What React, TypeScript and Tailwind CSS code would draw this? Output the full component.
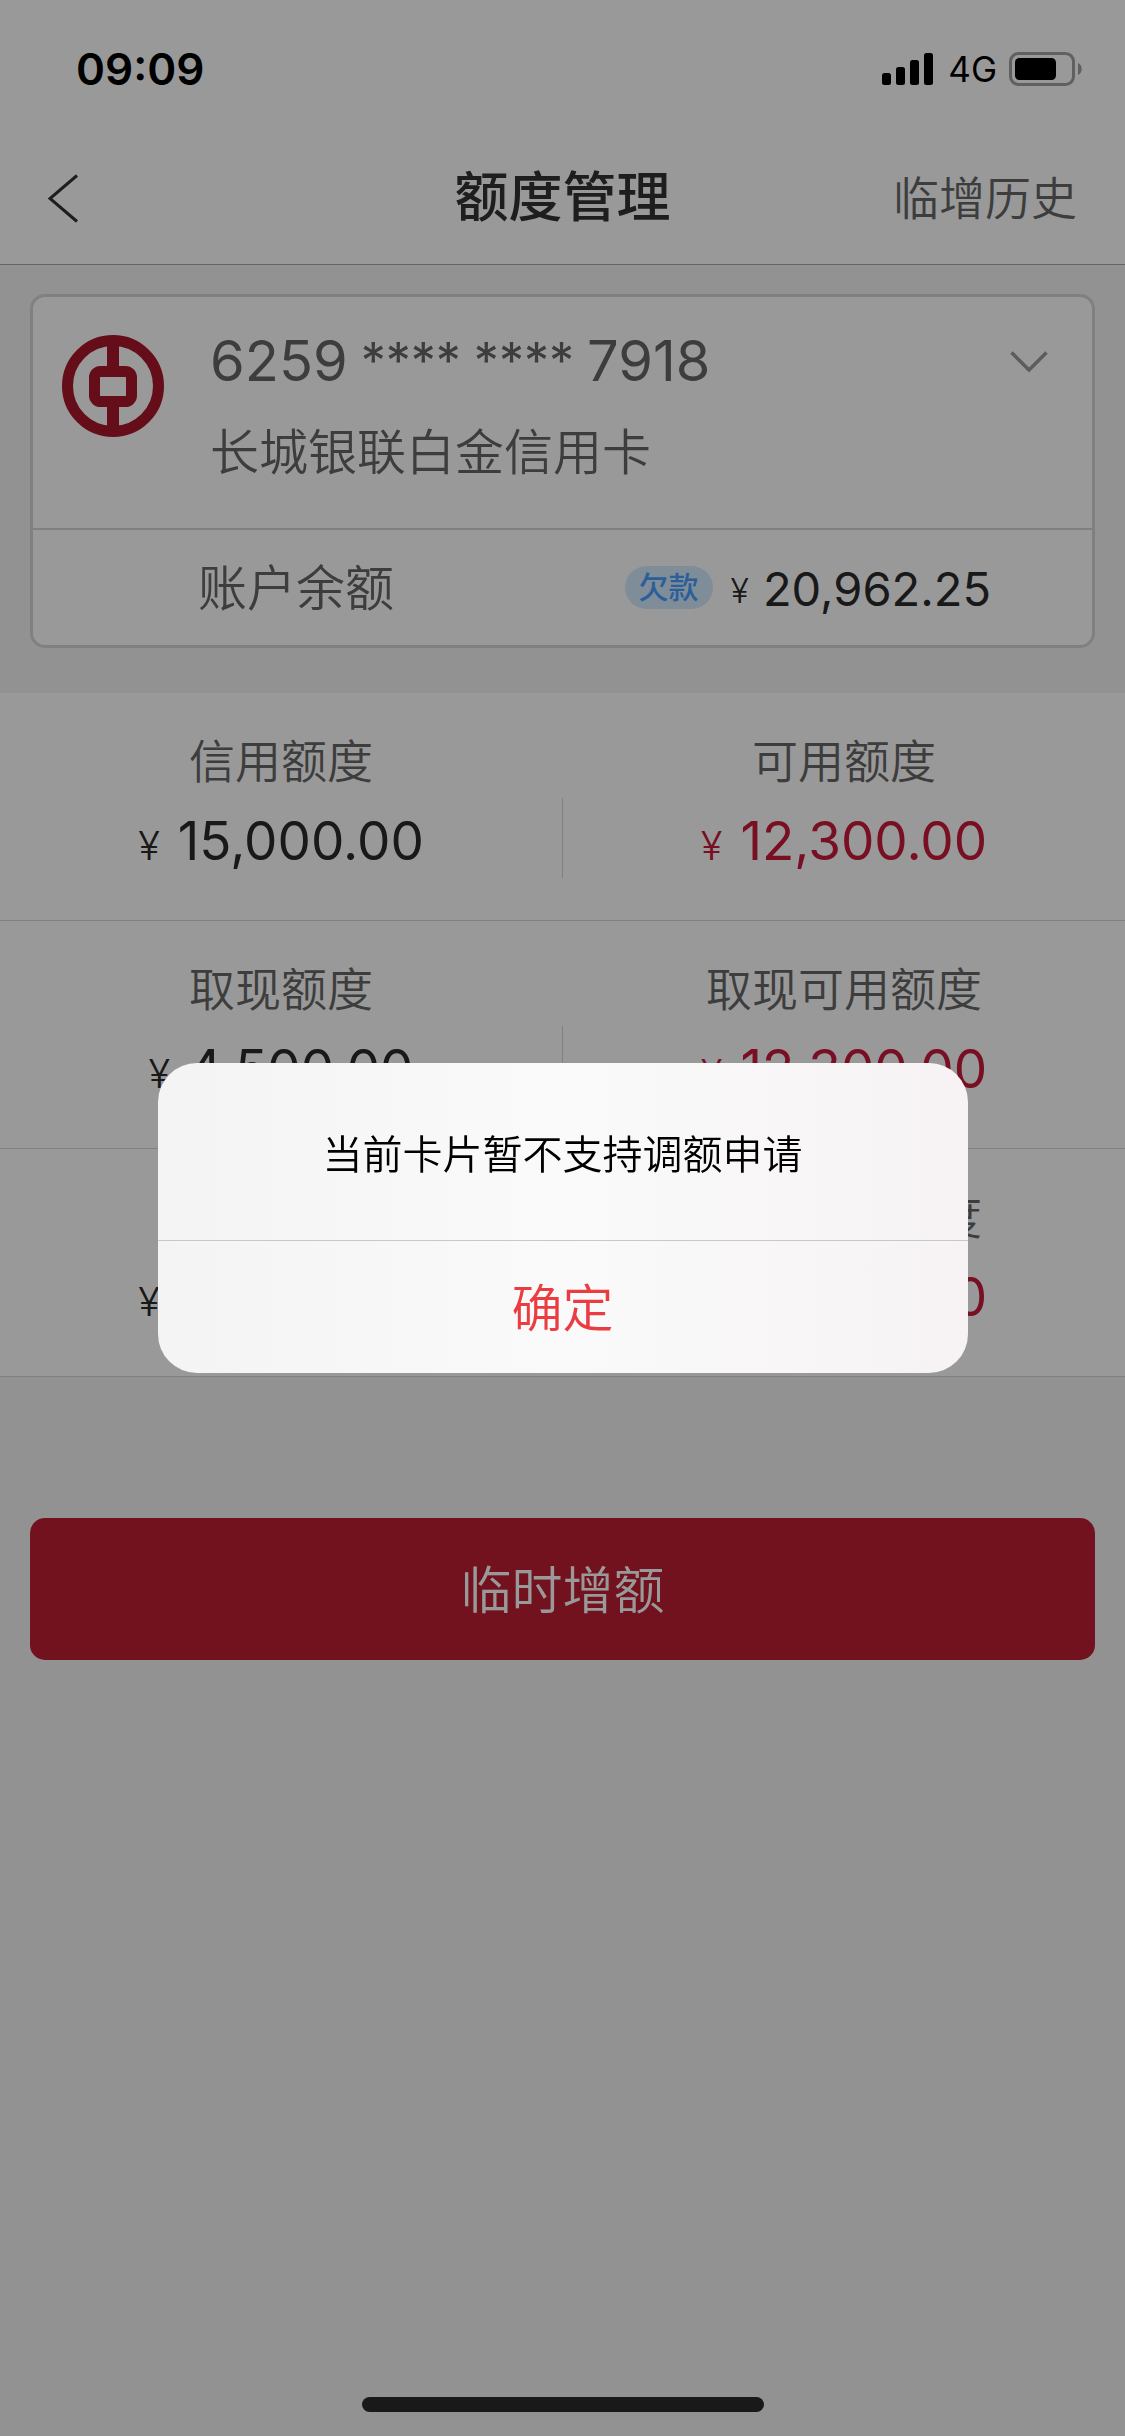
import React, { useState } from "react";

interface LimitItem {
  label: string;
  amount: string;
  highlight?: boolean;
}

const limits: LimitItem[][] = [
  [
    { label: "信用额度", amount: "15,000.00" },
    { label: "可用额度", amount: "12,300.00", highlight: true },
  ],
  [
    { label: "取现额度", amount: "4,500.00" },
    { label: "取现可用额度", amount: "12,300.00", highlight: true },
  ],
  [
    { label: "分期额度", amount: "15,000.00" },
    { label: "分期可用额度", amount: "12,300.00", highlight: true },
  ],
];

function StatusBar() {
  return (
    <div className="flex h-[132px] items-center justify-between bg-white pt-[6px] pr-[42px] pl-[76px] text-black">
      <span className="text-[44px] leading-[52px] font-semibold">09:09</span>
      <div className="flex items-center">
        <svg width="52" height="34" viewBox="0 0 52 34" aria-hidden="true">
          <rect x="0" y="21" width="9" height="12" rx="2.5" />
          <rect x="14" y="15" width="9" height="18" rx="2.5" />
          <rect x="28" y="8" width="9" height="25" rx="2.5" />
          <rect x="42" y="1" width="9" height="32" rx="2.5" />
        </svg>
        <span className="ml-[14px] text-[35px] leading-[40px]">4G</span>
        <svg className="ml-3" width="74" height="34" viewBox="0 0 74 34" aria-hidden="true">
          <rect x="1.5" y="1.5" width="63" height="31" rx="8" fill="none" stroke="#a0a0a0" strokeWidth="3" />
          <rect x="6" y="6" width="41" height="22" rx="4.5" />
          <path d="M69 11c5 2 5 10 0 12z" fill="#a0a0a0" />
        </svg>
      </div>
    </div>
  );
}

function Header() {
  return (
    <header className="grid h-[133px] grid-cols-[1fr_auto_1fr] items-center border-b border-[#aaa] bg-white px-12">
      <button type="button" aria-label="返回" className="justify-self-start">
        <svg width="31" height="49" viewBox="0 0 31 49" fill="none" stroke="#333" strokeWidth="3" aria-hidden="true">
          <path d="M29 1.5L2 24.5L29 47.5" />
        </svg>
      </button>
      <h1 className="text-[54px] leading-[64px] font-medium text-[#333]">额度管理</h1>
      <a href="#history" className="justify-self-end text-[46px] leading-[64px] font-[350] text-[#666]">
        临增历史
      </a>
    </header>
  );
}

function BankLogo() {
  return (
    <svg className="mt-[38px] shrink-0" width="102" height="102" viewBox="0 0 102 102" fill="none" stroke="#a8172a" aria-hidden="true">
      <circle cx="51" cy="51" r="45.5" strokeWidth="11" />
      <rect x="32.5" y="36.5" width="37" height="30" rx="6" strokeWidth="11" />
      <path d="M51 8v26M51 69v26" strokeWidth="12" />
    </svg>
  );
}

function CardPanel() {
  return (
    <section className="mx-[30px] mt-[29px] rounded-[15px] border-3 border-[#d5d5d5] bg-white">
      <div className="flex h-[231px] items-start pr-[44px] pl-[29px]">
        <BankLogo />
        <div className="ml-[46px] flex-1 pt-[32px] text-[#666]">
          <p className="flex gap-[13px] text-[56px] leading-[64px]">
            <span>6259</span>
            <span className="text-[50px]">****</span>
            <span className="text-[50px]">****</span>
            <span>7918</span>
          </p>
          <p className="mt-7 text-[49px] leading-[64px] font-[350]">长城银联白金信用卡</p>
        </div>
        <button type="button" aria-label="切换卡片" className="mt-[54px]">
          <svg width="38" height="23" viewBox="0 0 38 23" fill="none" stroke="#999" strokeWidth="3.5" aria-hidden="true">
            <path d="M1.5 1.5L19 19L36.5 1.5" />
          </svg>
        </button>
      </div>
      <div className="flex h-[117px] items-center justify-between border-t-2 border-[#d5d5d5] pt-[3px] pr-[101px] pl-[165px]">
        <span className="text-[49px] leading-[64px] font-[350] text-[#666]">账户余额</span>
        <div className="flex items-center text-[#2a2a2a]">
          <span className="mr-[18px] mb-1 rounded-full bg-[#d4ebff] px-[14px] text-[30px] leading-[43px] font-medium text-[#4a9eff]">
            欠款
          </span>
          <span className="mr-[14px] pt-1 text-[34px] leading-[40px] font-light">¥</span>
          <span className="text-[47px] leading-[64px]">20,962.25</span>
        </div>
      </div>
    </section>
  );
}

function LimitCell({ label, amount, highlight }: LimitItem) {
  return (
    <div className="flex flex-1 flex-col items-center pt-9 pb-[34px]">
      <span className="text-[46px] leading-[64px] font-[350] text-[#666]">{label}</span>
      <p className={`mt-2 flex items-baseline gap-[18px] leading-[80px] ${highlight ? "text-[#c8193a]" : "text-[#2a2a2a]"}`}>
        <span className="text-[40px] font-light">¥</span>
        <span className="text-[53px]">{amount}</span>
      </p>
    </div>
  );
}

export default function App() {
  const [open, setOpen] = useState(true);

  return (
    <div className="flex min-h-screen flex-col bg-[#f3f3f3] font-[Inter,'Noto_Sans_CJK_SC',sans-serif]">
      <StatusBar />
      <Header />
      <main className="flex-1">
        <CardPanel />

        <section className="mt-[45px] bg-white">
          {limits.map(([left, right]) => (
            <div key={left.label} className="flex items-center border-b border-[#d5d5d5]">
              <LimitCell {...left} />
              <div className="mt-[63px] h-20 w-px self-center bg-[#d5d5d5]" />
              <LimitCell {...right} />
            </div>
          ))}
        </section>

        <div className="px-[30px] pt-[141px]">
          <button
            type="button"
            onClick={() => setOpen(true)}
            className="h-[142px] w-full rounded-[15px] bg-[#c01e34] pt-[3px] text-[51px] leading-[64px] font-[350] text-white"
          >
            临时增额
          </button>
        </div>
      </main>

      <div className="mx-auto mb-6 h-[15px] w-[402px] rounded-full bg-[#2a2a2a]" />

      {open && (
        <div className="fixed inset-0 flex items-center justify-center bg-black/40">
          <div
            role="alertdialog"
            aria-modal="true"
            aria-labelledby="dialog-message"
            className="w-[72%] overflow-hidden rounded-[39px] bg-linear-to-r from-[#f4f4f4] via-[#fafafa] to-[#f7f3f4]"
          >
            <p id="dialog-message" className="px-12 pt-[60px] pb-[53px] text-center text-[40px] leading-[64px] font-[350] text-black">
              当前卡片暂不支持调额申请
            </p>
            <button
              type="button"
              onClick={() => setOpen(false)}
              className="h-[133px] w-full border-t border-[#c8c8c8] pt-[3px] text-[51px] leading-[64px] font-[350] text-[#ea3c41]"
            >
              确定
            </button>
          </div>
        </div>
      )}
    </div>
  );
}
